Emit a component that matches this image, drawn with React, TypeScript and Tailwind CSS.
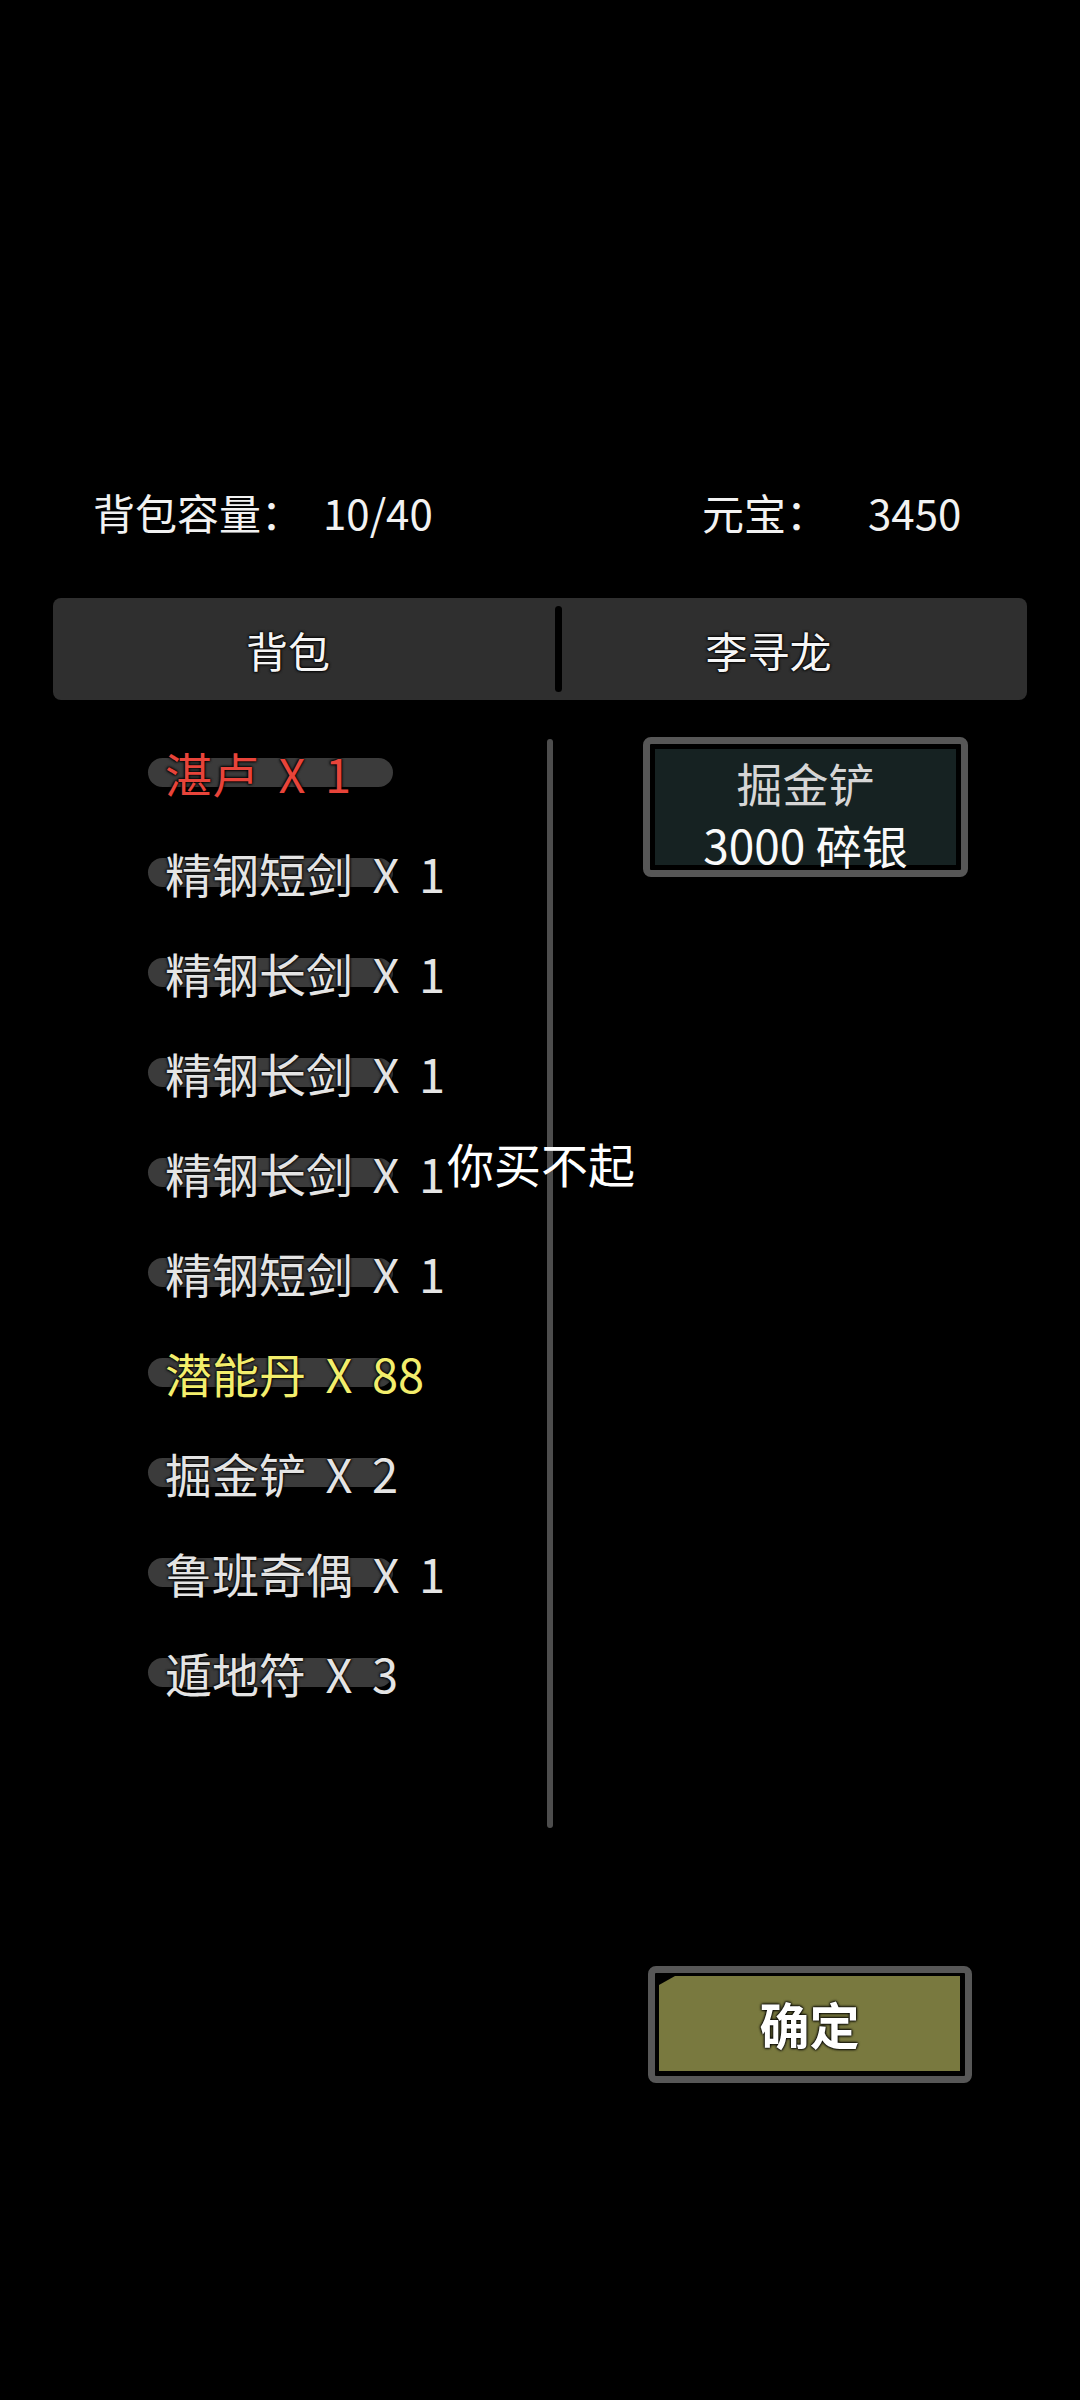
import React from "react";

type Item = { name: string; count: string; color: string };

const items: Item[] = [
  { name: "湛卢", count: "X 1", color: "text-[#e8443a]" },
  { name: "精钢短剑", count: "X 1", color: "text-[#e4e4e4]" },
  { name: "精钢长剑", count: "X 1", color: "text-[#e4e4e4]" },
  { name: "精钢长剑", count: "X 1", color: "text-[#e4e4e4]" },
  { name: "精钢长剑", count: "X 1", color: "text-[#e4e4e4]" },
  { name: "精钢短剑", count: "X 1", color: "text-[#e4e4e4]" },
  { name: "潜能丹", count: "X 88", color: "text-[#f3ee6c]" },
  { name: "掘金铲", count: "X 2", color: "text-[#e4e4e4]" },
  { name: "鲁班奇偶", count: "X 1", color: "text-[#e4e4e4]" },
  { name: "遁地符", count: "X 3", color: "text-[#e4e4e4]" },
];

// dark halo round the game text
const outline = "[text-shadow:0_0_3px_#000,0_0_3px_#000,0_0_2px_#000]";

const App: React.FC = () => {
  return (
    <div className="relative w-[1080px] min-h-[2400px] bg-black overflow-hidden [font-family:'Noto_Sans_CJK_SC','Noto_Sans',sans-serif]">
      {/* Top stats */}
      <div className="pt-[481px] h-[543px] flex items-center text-[42px] leading-[62px] text-[#f2f2f2]">
        <div className="w-[702px] pl-[93px] flex">
          <span>背包容量：</span>
          <span className="ml-[20px]">10/40</span>
        </div>
        <div className="flex">
          <span>元宝：</span>
          <span className="ml-[40px]">3450</span>
        </div>
      </div>

      {/* Tabs */}
      <div className="mt-[55px] ml-[53px] w-[974px] h-[102px] rounded-[8px] bg-[#2f2f2f] flex items-center">
        <div className={`flex-1 flex justify-center pr-[32px] text-[42px] text-[#f6f6f6] ${outline}`}>背包</div>
        <div className="w-[7px] h-[86px] rounded-full bg-black" />
        <div className={`w-[465px] flex justify-center pr-[52px] text-[42px] text-[#f6f6f6] ${outline}`}>李寻龙</div>
      </div>

      {/* Body */}
      <div className="flex items-start">
        {/* Bag list */}
        <div className="w-[547px] pt-[22px] pl-[148px] flex flex-col">
          {items.map((it, i) => (
            <div key={i} className="h-[100px] grid items-center">
              <div className="[grid-area:1/1] w-[245px] h-[29px] rounded-full bg-[#3b3b3b]" />
              <div
                className={`[grid-area:1/1] pl-[17px] text-[47px] leading-none whitespace-nowrap [word-spacing:9px] ${it.color} ${outline}`}
              >
                {it.name} {it.count}
              </div>
            </div>
          ))}
        </div>

        {/* Scrollbar */}
        <div className="mt-[39px] w-[6px] h-[1089px] rounded-full bg-[#4d4d4d]" />

        {/* Shop item */}
        <div className="mt-[37px] ml-[90px] w-[325px] h-[140px] rounded-[8px] border-[7px] border-[#575757] bg-black p-[5px]">
          <div className="h-[116px] bg-[#162222] flex flex-col items-center pt-[2px] text-[46px] leading-[62px]">
            <span className="text-[#d6d6d6]">掘金铲</span>
            <span className="text-[#fafafa] whitespace-nowrap">3000 碎银</span>
          </div>
        </div>
      </div>

      {/* Confirm */}
      <div className="mt-[138px] pl-[648px]">
        <div className="w-[324px] h-[117px] rounded-[8px] border-[7px] border-[#575757] bg-black pl-[4px] pr-[5px] pt-[3px] pb-[5px]">
          <div className="h-full bg-[#79793f] [clip-path:polygon(16px_0,100%_0,100%_100%,0_100%,0_9px)] flex items-center justify-center">
            <span className={`text-[50px] font-bold text-white ${outline}`}>确定</span>
          </div>
        </div>
      </div>

      {/* Toast */}
      <div className="absolute left-[447px] top-[1139px] h-[47px] text-[47px] leading-[47px] text-white whitespace-nowrap">
        你买不起
      </div>
    </div>
  );
};

export default App;
